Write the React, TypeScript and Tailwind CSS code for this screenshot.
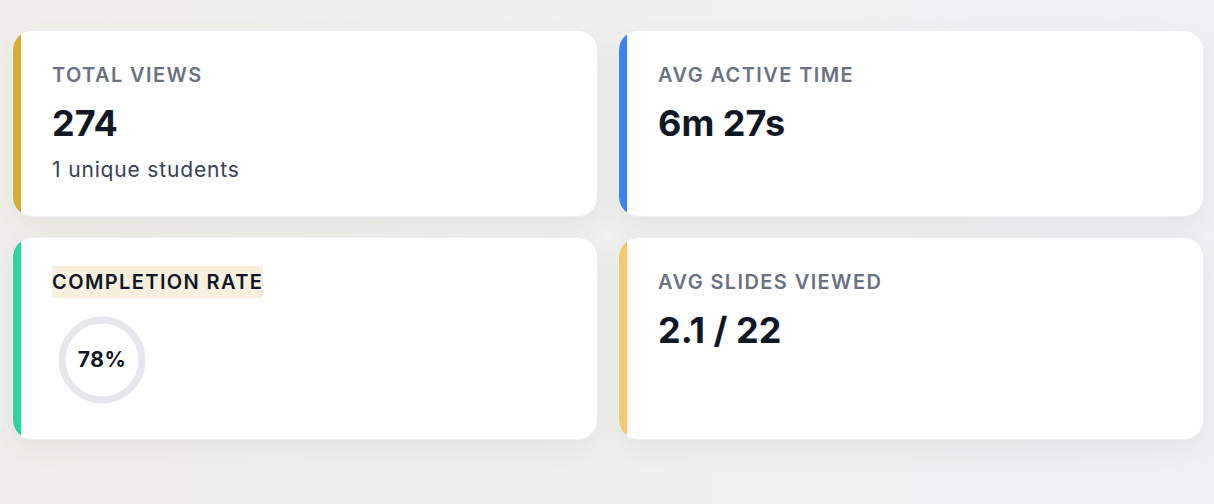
import React from 'react';

type Stat = {
  label: string;
  value?: string;
  sub?: string;
  bar: string;
  ring?: number;
  highlight?: boolean;
};

const stats: Stat[] = [
  { label: 'Total Views', value: '274', sub: '1 unique students', bar: 'bg-[#d5ad36]' },
  { label: 'Avg Active Time', value: '6m 27s', bar: 'bg-[#3b82f6]' },
  { label: 'Completion Rate', ring: 78, bar: 'bg-[#2fd49b]', highlight: true },
  { label: 'Avg Slides Viewed', value: '2.1 / 22', bar: 'bg-[#f4c872]' },
];

function Ring({ pct }: { pct: number }) {
  return (
    <div className="relative mt-3 h-[97px] w-[100px]">
      <svg width="100" height="100" viewBox="0 0 100 100">
        <circle cx="50" cy="50" r="40" fill="none" stroke="#e5e7eb" strokeWidth="7" />
      </svg>
      <div className="absolute left-0 top-0 flex h-[100px] w-[100px] items-center justify-center text-[21px] font-bold tracking-wide text-gray-900">
        {pct}%
      </div>
    </div>
  );
}

function StatCard({ stat }: { stat: Stat }) {
  return (
    <div className="flex overflow-hidden rounded-[20px] border border-gray-200/70 bg-white shadow-[0_10px_28px_rgba(60,60,40,0.07)]">
      <div className={`w-2 shrink-0 ${stat.bar}`} />
      <div className="flex-1 pt-7 pb-8 pl-[31px] pr-8">
        <div>
          <span
            className={`inline-block text-[20px] font-semibold uppercase leading-8 tracking-[0.07em] ${
              stat.highlight ? 'bg-[#f6f0dd] text-gray-900' : 'text-gray-500'
            }`}
          >
            {stat.label}
          </span>
        </div>
        {stat.value && (
          <div className="mt-3 text-4xl font-bold text-gray-900">{stat.value}</div>
        )}
        {stat.sub && (
          <div className="mt-3 text-[21px] leading-[29px] tracking-[0.04em] text-gray-700">
            {stat.sub}
          </div>
        )}
        {stat.ring !== undefined && <Ring pct={stat.ring} />}
      </div>
    </div>
  );
}

export default function App() {
  return (
    <div
      className="min-h-screen bg-gradient-to-r from-[#f0efeb] to-[#f0f1f4] pt-[30px] pl-3 pr-2.5 pb-10"
      style={{ fontFamily: 'Inter, "Noto Sans", sans-serif' }}
    >
      <div className="grid grid-cols-2 gap-5">
        {stats.map((s) => (
          <StatCard key={s.label} stat={s} />
        ))}
      </div>
    </div>
  );
}
